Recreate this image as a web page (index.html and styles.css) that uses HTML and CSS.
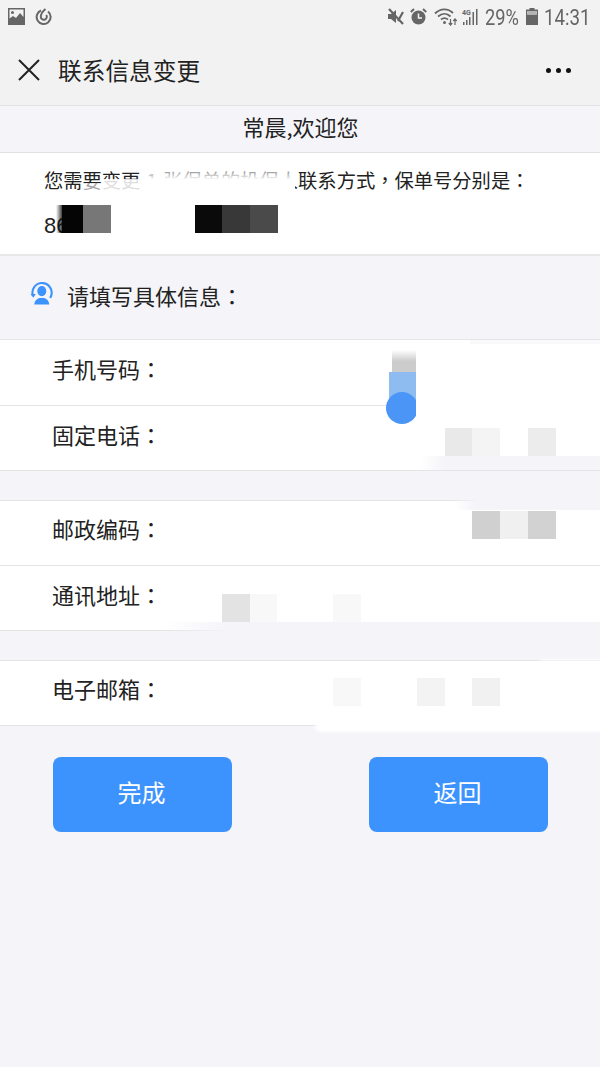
FILE: index.html
```html
<!DOCTYPE html>
<html lang="zh-CN">
<head>
<meta charset="utf-8">
<title>联系信息变更</title>
<link rel="stylesheet" href="styles.css">
</head>
<body>
<div class="page">
  <header class="top">
    <div class="status">
      <div class="status-left">
        <svg class="ic-img" viewBox="0 0 17 17"><path fill="#666" fill-rule="evenodd" d="M0 0h17v17H0zM1.500 1.500v9l3.500-2.500 3 2 4-5 3.500 4V1.500z"/><circle cx="4.500" cy="4.500" r="1.500" fill="#666"/></svg>
        <svg class="ic-ring" viewBox="0 0 17 17"><path fill="none" stroke="#666" stroke-width="2" d="M6 2.500A7 7 0 1 0 13 3.500M10.500 1C8 3 6 5.500 5.800 8.500a3 3 0 1 0 5.400-1.500"/></svg>
      </div>
      <div class="status-right">
        <svg class="ic-mute" viewBox="0 0 17 17"><path fill="#666" d="M1 6h3l5-4v13l-5-4H1z"/><path stroke="#666" stroke-width="2.200" d="M2 1l14 15M16 4l-5 9" fill="none"/></svg>
        <svg class="ic-alarm" viewBox="0 0 17 17"><circle cx="8.500" cy="9.500" r="7" fill="#666"/><path stroke="#f2f2f2" stroke-width="1.500" fill="none" d="M8.500 5.500v4.500h3.500"/><path stroke="#666" stroke-width="2" d="M0.800 4L4 1M16.200 4L13 1"/></svg>
        <svg class="ic-wifi" viewBox="0 0 25 19"><path fill="none" stroke="#666" stroke-width="1.800" d="M1 6.500C6.500 1 14 1 19 6M4 9.500c4-3.500 9-3.500 12.500 0M7 12.500c2.500-2 4.500-2 7 0"/><circle cx="10.500" cy="15.500" r="1.500" fill="#666"/><path stroke="#666" stroke-width="1.200" d="M16.500 12v6M14.800 16l1.700 2 1.700-2M21 18v-6M19.300 14l1.700-2 1.700 2" fill="none"/></svg>
        <svg class="ic-signal" viewBox="0 0 17 19"><path fill="#666" d="M1 15h1.500v3H1zM4 13h1.500v5H4zM7 10h1.500v8H7zM10.500 5H12v13h-1.500zM14 2h1.500v16H14z"/></svg>
        <span class="tiny4g">4G</span>
        <span class="pct">29%</span>
        <svg class="ic-batt" viewBox="0 0 12 17"><path fill="#666" fill-rule="evenodd" d="M3.500 0h5v1.500H12V17H0V1.500h3.500zM1.300 3v3.500h9.400V3z"/><path fill="#b5b5b5" d="M1.300 3h9.400v3.500H1.300z"/></svg>
        <span class="clock">14:31</span>
      </div>
    </div>
    <div class="nav">
      <svg class="ic-close" viewBox="0 0 22 22"><path stroke="#222" stroke-width="2" fill="none" d="M1 1l20 20M21 1L1 21"/></svg>
      <h1 class="nav-title">联系信息变更</h1>
      <div class="dots"><i></i><i></i><i></i></div>
    </div>
  </header>

  <div class="greet">常晨,欢迎您</div>

  <section class="notice">
    <p class="notice-line">您需要变更<span class="count">1</span>张保单的投保人联系方式<span class="p">，</span>保单号分别是<span class="p">：</span></p>
    <p class="notice-num">86</p>
  </section>

  <div class="heading">
    <svg class="ic-agent" viewBox="0 0 24 24">
      <path fill="none" stroke="#3d93fd" stroke-width="2.200" d="M3.200 14.500A10 10 0 1 1 21 16.500"/>
      <path fill="#3d93fd" d="M0.500 12.500h5.500l-2.500 4z"/>
      <ellipse cx="12.300" cy="9.500" rx="4.700" ry="5.300" fill="#3d93fd"/>
      <path fill="#3d93fd" d="M4.500 23.500c0-4 3-6 5.500-6.800h4.600c2.500.8 5.400 2.800 5.400 6.800z"/>
    </svg>
    <span class="heading-text">请填写具体信息<span class="p">：</span></span>
  </div>

  <div class="group">
    <div class="row">手机号码<span class="p">：</span></div>
    <div class="row">固定电话<span class="p">：</span></div>
  </div>
  <div class="group group-tight">
    <div class="row">邮政编码<span class="p">：</span></div>
    <div class="row">通讯地址<span class="p">：</span></div>
  </div>
  <div class="group group-tight">
    <div class="row">电子邮箱<span class="p">：</span></div>
  </div>

  <div class="actions">
    <button class="btn">完成</button>
    <button class="btn">返回</button>
  </div>

  <svg class="mask" viewBox="0 0 600 1067" aria-hidden="true">
    <defs>
      <linearGradient id="fadeL"><stop offset="0" stop-color="#000" stop-opacity="0"/><stop offset="1" stop-color="#000"/></linearGradient>
      <linearGradient id="wipe" x1="0" x2="0" y1="0" y2="1"><stop offset="0" stop-color="#fff" stop-opacity=".45"/><stop offset=".4" stop-color="#fff"/></linearGradient>
      <linearGradient id="lavL"><stop offset="0" stop-color="#f4f4f9" stop-opacity="0"/><stop offset=".15" stop-color="#f4f4f9"/></linearGradient>
      <linearGradient id="grayTop" x1="0" x2="0" y1="0" y2="1"><stop offset="0" stop-color="#ccc" stop-opacity="0"/><stop offset=".5" stop-color="#ccc"/></linearGradient>
      <clipPath id="clipBlue"><rect x="380" y="345" width="36" height="90"/></clipPath>
      <filter id="soft" x="-5%" y="-60%" width="110%" height="220%"><feGaussianBlur stdDeviation="1.500"/></filter>
    </defs>

    <!-- notice wash-out -->
    <rect x="82" y="183" width="22" height="11" fill="#fff" opacity=".6"/>
    <rect x="103" y="179" width="42" height="15" fill="#fff" opacity=".85"/>
    <rect x="145" y="170" width="150" height="24" fill="url(#wipe)"/>

    <!-- policy number blocks -->
    <rect x="56" y="205" width="8" height="28" fill="url(#fadeL)"/>
    <rect x="62" y="205" width="21" height="28" fill="#050505"/>
    <rect x="83" y="205" width="28" height="28" fill="#777"/>
    <rect x="195" y="205" width="27" height="28" fill="#0a0a0a"/>
    <rect x="222" y="205" width="28" height="28" fill="#383838"/>
    <rect x="250" y="205" width="28" height="28" fill="#4a4a4a"/>

    <!-- phone smear -->
    <rect x="470" y="340" width="130" height="4" fill="#f9f9fc"/>
    <rect x="416" y="344" width="184" height="112" fill="#fff"/>
    <g clip-path="url(#clipBlue)">
      <rect x="392" y="350" width="24" height="22" fill="url(#grayTop)"/>
      <rect x="389" y="372" width="27" height="28" fill="#8fbcf0"/>
      <circle cx="402" cy="408" r="16" fill="#4a95f5"/>
      <rect x="400" y="400" width="16" height="10" fill="#4a95f5"/>
    </g>
    <rect x="445" y="428" width="27" height="28" fill="#e9e9e9"/>
    <rect x="472" y="428" width="28" height="28" fill="#f4f4f4"/>
    <rect x="528" y="428" width="28" height="28" fill="#ececec"/>
    <rect x="420" y="456" width="180" height="14" fill="url(#lavL)"/>

    <!-- postcode smear -->
    <rect x="455" y="500" width="145" height="10" fill="url(#lavL)"/>
    <rect x="472" y="511" width="28" height="28" fill="#d0d0d0"/>
    <rect x="500" y="511" width="28" height="28" fill="#f0f0f0"/>
    <rect x="528" y="511" width="28" height="28" fill="#d2d2d2"/>

    <!-- address smear -->
    <rect x="222" y="594" width="28" height="28" fill="#e3e3e3"/>
    <rect x="250" y="594" width="27" height="28" fill="#f8f8f8"/>
    <rect x="333" y="594" width="28" height="28" fill="#f8f8f8"/>
    <rect x="165" y="622" width="435" height="10" fill="url(#lavL)"/>
    <rect x="540" y="659" width="70" height="2" fill="#fff" filter="url(#soft)"/>

    <!-- e-mail smear -->
    <rect x="333" y="678" width="28" height="28" fill="#f8f8f8"/>
    <rect x="417" y="678" width="28" height="28" fill="#f3f3f3"/>
    <rect x="472" y="678" width="28" height="28" fill="#f1f1f1"/>
    <rect x="315" y="722" width="300" height="10" rx="5" fill="#fff" filter="url(#soft)"/>
  </svg>
</div>
</body>
</html>
```

FILE: styles.css
```css
* { box-sizing: border-box; }

html, body { margin: 0; padding: 0; }

body {
  font-family: "Noto Sans CJK SC", "Liberation Sans", sans-serif;
  color: #222;
  background: #f4f4f9;
}

.p {
  font-family: "Noto Sans CJK TC", sans-serif;
  font-feature-settings: "locl" 0;
}

.page {
  position: relative;
  width: 600px;
  height: 1067px;
  overflow: hidden;
  background: #f4f4f9;
}

.top {
  height: 106px;
  background: #f2f2f2;
  border-bottom: 1px solid #e2e2e2;
}

.status {
  height: 36px;
  padding: 7px 11px 0 8px;
  display: flex;
  justify-content: space-between;
}

.status-left, .status-right {
  display: flex;
  align-items: flex-start;
}

.status-left { gap: 10px; }

.status-right { position: relative; }

.ic-img, .ic-ring, .ic-mute, .ic-alarm { width: 17px; height: 17px; margin-top: 1px; }

.ic-mute { margin-right: 6px; }
.ic-alarm { margin-right: 7px; }
.ic-wifi { width: 25px; height: 19px; margin-right: 3px; }
.ic-signal { width: 17px; height: 19px; margin-right: 6px; }

.tiny4g {
  position: absolute;
  left: 75px;
  top: 2px;
  font: 700 7px/8px "Roboto", sans-serif;
  color: #666;
}

.pct, .clock {
  font: 400 22px/22px "Roboto", sans-serif;
  color: #666;
  white-space: nowrap;
  transform-origin: left center;
}

.pct { width: 34px; margin-right: 7px; transform: scaleX(.83); }

.clock { width: 45px; transform: scaleX(.85); }

.ic-batt { width: 12px; height: 17px; margin: 1px 6px 0 0; }

.nav {
  height: 69px;
  padding: 0 29px 1px 18px;
  display: flex;
  align-items: center;
}

.ic-close { width: 22px; height: 22px; margin-right: 18px; }

.nav-title {
  margin: 0;
  flex: 1;
  font-size: 23.700px;
  font-weight: 400;
  line-height: 34px;
  color: #222;
}

.dots { display: flex; gap: 5px; }

.dots i {
  width: 5px;
  height: 5px;
  border-radius: 50%;
  background: #111;
}

.greet {
  height: 47px;
  padding-left: 1px;
  border-bottom: 1px solid #e2e2e2;
  text-align: center;
  font-size: 22px;
  line-height: 41px;
}

.notice {
  height: 103px;
  background: #fff;
  border-bottom: 2px solid #e8e8e8;
  padding: 12px 0 0 44px;
}

.notice-line, .notice-num {
  margin: 0;
  font-size: 19.300px;
  line-height: 30px;
}

.count { margin: 0 6px; }

.notice-num {
  margin-top: 16px;
  font-family: "Liberation Sans", sans-serif;
  font-size: 22px;
}

.heading {
  height: 83px;
  padding: 0 0 8px 30px;
  display: flex;
  align-items: center;
  font-size: 22px;
}

.heading-text { padding-top: 2px; }

.ic-agent { width: 23px; height: 23px; margin-right: 14px; }

.group {
  background: #fff;
  border-top: 1px solid #e4e4e4;
  border-bottom: 1px solid #e4e4e4;
  margin-bottom: 29px;
}

.row {
  height: 65px;
  padding: 0 0 10px 52px;
  display: flex;
  align-items: center;
  font-size: 22px;
}

.row + .row {
  padding-top: 1px;
  border-top: 1px solid #e4e4e4;
}

.group-tight .row:first-child {
  height: 64px;
  padding-bottom: 11px;
}

.actions {
  margin-top: 31px;
  padding: 0 52px 0 53px;
  display: flex;
  justify-content: space-between;
}

.btn {
  width: 179px;
  height: 75px;
  padding: 0 2px 6px 0;
  border: 0;
  border-radius: 8px;
  background: #3d93fd;
  color: #fff;
  font-family: inherit;
  font-size: 24px;
}

.mask {
  position: absolute;
  left: 0;
  top: 0;
  width: 600px;
  height: 1067px;
}
```
